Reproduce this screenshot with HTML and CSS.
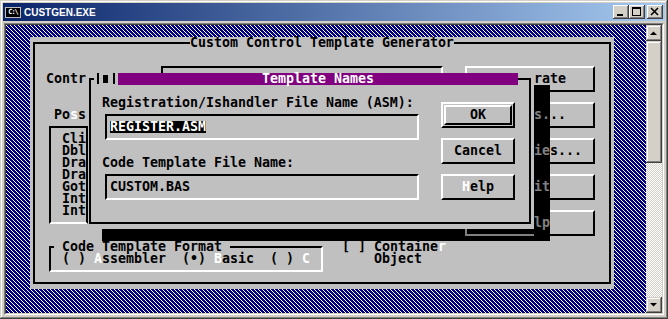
FILE: index.html
```html
<!DOCTYPE html>
<html lang="en">
<head>
    <meta charset="UTF-8">
    <meta name="viewport" content="width=device-width, initial-scale=1.0">
    <title>CUSTGEN.EXE</title>
    <link rel="stylesheet" href="styles.css">
</head>
<body>
<div class="window">
    <div class="titlebar">
        <div class="appicon">C:\</div>
        <div class="title">CUSTGEN.EXE</div>
        <div class="caption-buttons">
            <div class="cap-btn"><svg width="16" height="14" viewBox="0 0 16 14"><rect x="4" y="9" width="6" height="2" fill="#000"/></svg></div>
            <div class="cap-btn"><svg width="16" height="14" viewBox="0 0 16 14"><rect x="3" y="2" width="9" height="2" fill="#000"/><rect x="3.5" y="2.5" width="8" height="8" fill="none" stroke="#000"/></svg></div>
            <div class="cap-btn close"><svg width="16" height="14" viewBox="0 0 16 14"><path d="M4 3 L11 10 M11 3 L4 10" stroke="#000" stroke-width="1.6"/></svg></div>
        </div>
    </div>

    <div class="client">
        <div class="client-in">
            <!-- text mode screen, 80 x 24 cells of 8 x 12 -->
            <div class="screen">
                <!-- main dialog (only what the popup leaves visible) -->
                <div class="dlg main-dlg"><div class="edge"></div></div>
                <div class="txt on-gray main-title">Custom Control Template Generator</div>

                <div class="txt lbl-name">Contr</div>
                <div class="sunken name-box"></div>

                <div class="raised rb rb-1"></div>
                <div class="raised rb rb-2"></div>
                <div class="raised rb rb-3"></div>
                <div class="raised rb rb-4"></div>
                <div class="raised rb rb-5"></div>

                <div class="txt lbl-events">Po<span class="hk">s</span>s</div>
                <div class="txt item it-1">Cli</div>
                <div class="txt item it-2">Dbl</div>
                <div class="txt item it-3">Dra</div>
                <div class="txt item it-4">Dra</div>
                <div class="txt item it-5">Got</div>
                <div class="txt item it-6">Int</div>
                <div class="txt item it-7">Int</div>

                <div class="sunken fmt-box"></div>
                <div class="txt on-gray fmt-title"> Code Template Format </div>
                <div class="txt fmt-opts">( ) <span class="hk">A</span>ssembler  (•) <span class="hk">B</span>asic  ( ) <span class="hk">C</span></div>

                <div class="txt chk-1">[ ] Containe<span class="hk">r</span></div>
                <div class="txt chk-2">Object</div>

                <!-- Template Names dialog -->
                <div class="dlg tpl-dlg"><div class="edge"></div></div>
                <div class="list-frame"></div>
                <div class="ctl"><span class="tick"></span><span class="knob"></span><span class="tick"></span></div>
                <div class="txt tpl-title">Template Names</div>

                <div class="txt lbl-asm">Registration/Ishandler File Name (ASM):</div>
                <div class="sunken tbox-1"></div>
                <div class="txt sel">REGISTER.ASM</div>

                <div class="txt lbl-bas">Code Template File Name:</div>
                <div class="sunken tbox-2"></div>
                <div class="txt val-bas">CUSTOM.BAS</div>

                <div class="raised btn btn-ok"><div class="inner"></div></div>
                <div class="txt t-ok">OK</div>
                <div class="raised btn btn-cancel"></div>
                <div class="txt t-cancel">Cancel</div>
                <div class="raised btn btn-help"></div>
                <div class="txt t-help"><span class="hk">H</span>elp</div>

                <!-- shadow; what lies under it shows dimmed -->
                <div class="shadow sh-right"></div>
                <div class="shadow sh-bottom"></div>
                <div class="dim-line"></div>
                <div class="txt rb-t rb-t1">rate</div>
                <div class="txt rb-t rb-t2"><span class="dim">s.</span>..</div>
                <div class="txt rb-t rb-t3"><span class="dim">ie</span>s...</div>
                <div class="txt rb-t rb-t4"><span class="dim">it</span></div>
                <div class="txt rb-t rb-t5"><span class="dim">lp</span></div>
            </div>

            <div class="vscroll">
                <div class="sb-btn"><svg width="16" height="16" viewBox="0 0 16 16"><polygon points="4,10 11,10 7.5,6.5" fill="#000"/></svg></div>
                <div class="sb-thumb"></div>
                <div class="sb-track"></div>
                <div class="sb-btn"><svg width="16" height="16" viewBox="0 0 16 16"><polygon points="4,6 11,6 7.5,9.5" fill="#000"/></svg></div>
            </div>
        </div>
    </div>
</div>
</body>
</html>
```

FILE: styles.css
```css
body {
    margin: 0;
    width: 668px;
    height: 319px;
    overflow: hidden;
    background: #d4d0c8;
}

.window {
    width: 668px;
    height: 319px;
    box-sizing: border-box;
    padding: 3px;
    background: #d4d0c8;
    box-shadow: inset -1px -1px #404040, inset 1px 1px #d4d0c8, inset -2px -2px #808080, inset 2px 2px #fff;
    display: flex;
    flex-direction: column;
}

/* title bar */
.titlebar {
    height: 18px;
    display: flex;
    align-items: center;
    padding: 0 2px;
    background: linear-gradient(to right, #0a246a, #a6caf0);
}
.appicon {
    width: 14px;
    height: 9px;
    margin-right: 3px;
    border: 1px solid #c0c0c0;
    background: #000;
    color: #fff;
    font: bold 7px/9px "DejaVu Sans Mono", monospace;
    letter-spacing: -1px;
    text-align: center;
}
.title {
    flex: 1;
    color: #fff;
    font: bold 10px "Liberation Sans", Arial, sans-serif;
}
.caption-buttons {
    display: flex;
}
.cap-btn {
    width: 16px;
    height: 14px;
    background: #d4d0c8;
    box-shadow: inset -1px -1px #404040, inset 1px 1px #fff, inset -2px -2px #808080;
}
.cap-btn svg {
    display: block;
}
.cap-btn.close {
    margin-left: 2px;
}

/* console client area */
.client {
    margin: 2px 1px 1px;
    border: 1px solid;
    border-color: #808080 #fff #fff #808080;
}
.client-in {
    display: flex;
    border: 1px solid;
    border-color: #404040 #d4d0c8 #d4d0c8 #404040;
}

.screen {
    width: 640px;
    height: 288px;
    display: grid;
    grid-template-columns: repeat(80, 8px);
    grid-template-rows: repeat(24, 12px);
    background:
        conic-gradient(at 1px 1px, #0000 75%, #fff 0) 0 0 / 4px 4px,
        conic-gradient(at 1px 1px, #0000 75%, #fff 0) 1px 1px / 4px 4px,
        conic-gradient(at 1px 1px, #0000 75%, #fff 0) 2px 2px / 4px 4px,
        conic-gradient(at 1px 1px, #0000 75%, #fff 0) 3px 3px / 4px 4px,
        #000080;
    font: bold 13.29px "DejaVu Sans Mono", monospace;
    line-height: 12px;
    color: #000;
}

.txt {
    white-space: pre;
}
.hk {
    color: #fff;
}
.on-gray {
    background: #c0c0c0;
}

.dlg {
    display: flex;
    background: #c0c0c0;
}
.dlg .edge {
    flex: 1;
    margin: 5px 3px;
    border: 2px solid #000;
}
.sunken {
    margin: 5px 3px;
    border: 2px solid;
    border-color: #000 #fff #fff #000;
}
.raised {
    margin: 5px 3px;
    border: 2px solid;
    border-color: #fff #000 #000 #fff;
}

/* main dialog */
.main-dlg { grid-column: 4 / 77; grid-row: 2 / 23; }
.main-title { grid-column: 24 / span 33; grid-row: 2; }
.lbl-name { grid-column: 6 / span 5; grid-row: 5; }
.name-box { grid-column: 20 / 56; grid-row: 4 / 7; }

.rb { grid-column: 58 / 75; }
.rb-1 { grid-row: 4 / 7; }
.rb-2 { grid-row: 7 / 10; }
.rb-3 { grid-row: 10 / 13; }
.rb-4 { grid-row: 13 / 16; }
.rb-5 { grid-row: 16 / 19; }

.lbl-events { grid-column: 7 / span 4; grid-row: 8; }
.item { grid-column: 8 / span 3; }
.it-1 { grid-row: 10; }
.it-2 { grid-row: 11; }
.it-3 { grid-row: 12; }
.it-4 { grid-row: 13; }
.it-5 { grid-row: 14; }
.it-6 { grid-row: 15; }
.it-7 { grid-row: 16; }

.fmt-box { grid-column: 6 / 41; grid-row: 19 / 22; }
.fmt-title { grid-column: 7 / span 22; grid-row: 19; }
.fmt-opts { grid-column: 8 / span 31; grid-row: 20; }
.chk-1 { grid-column: 43 / span 13; grid-row: 19; }
.chk-2 { grid-column: 47 / span 6; grid-row: 20; }

/* Template Names dialog */
.tpl-dlg { grid-column: 11 / 67; grid-row: 5 / 18; }
.list-frame {
    grid-column: 6 / 11;
    grid-row: 9 / 18;
    margin: 5px -2px 5px 3px;
    border: 2px solid #000;
    border-bottom-color: #fff;
}
.ctl {
    grid-column: 12 / 15;
    grid-row: 5;
    display: flex;
    background: #c0c0c0;
}
.ctl .tick {
    width: 0;
    margin: 0 3px 1px 3px;
    border-left: 2px solid #000;
}
.ctl .knob {
    width: 5px;
    margin: 2px 2px 2px 1px;
    background: #000;
}
.tpl-title {
    grid-column: 15 / 65;
    grid-row: 5;
    background: #800080;
    color: #fff;
    text-align: center;
}

.lbl-asm { grid-column: 13 / span 39; grid-row: 7; }
.tbox-1 { grid-column: 13 / 53; grid-row: 8 / 11; }
.sel { grid-column: 14 / span 12; grid-row: 9; background: #000; color: #fff; }
.lbl-bas { grid-column: 13 / span 24; grid-row: 12; }
.tbox-2 { grid-column: 13 / 53; grid-row: 13 / 16; }
.val-bas { grid-column: 14 / span 10; grid-row: 14; }

.btn { grid-column: 55 / 65; }
.btn-ok { grid-row: 7 / 10; display: flex; }
.btn-ok .inner {
    flex: 1;
    margin: 1px;
    border: 2px solid;
    border-color: #fff #000 #000 #fff;
}
.btn-cancel { grid-row: 10 / 13; }
.btn-help { grid-row: 13 / 16; }
.t-ok { grid-column: 59 / span 2; grid-row: 8; }
.t-cancel { grid-column: 57 / span 6; grid-row: 11; }
.t-help { grid-column: 58 / span 4; grid-row: 14; }

/* shadow */
.shadow { background: #000; }
.sh-right { grid-column: 67 / 69; grid-row: 6 / 19; }
.sh-bottom { grid-column: 13 / 69; grid-row: 18; }
.dim { color: #808080; }
.dim-line {
    grid-column: 58 / 67;
    grid-row: 18;
    margin: 0 0 5px 3px;
    border-left: 2px solid #808080;
    border-bottom: 2px solid #808080;
}

/* right-hand buttons of the main dialog, from column 66 on */
.rb-t { grid-column: 67 / span 6; }
.rb-t1 { grid-row: 5; }
.rb-t2 { grid-row: 8; }
.rb-t3 { grid-row: 11; }
.rb-t4 { grid-row: 14; }
.rb-t5 { grid-row: 17; }

/* console scroll bar */
.vscroll {
    width: 16px;
    height: 288px;
    display: flex;
    flex-direction: column;
}
.sb-btn {
    height: 16px;
    background: #d4d0c8;
    box-shadow: inset -1px -1px #404040, inset 1px 1px #d4d0c8, inset -2px -2px #808080, inset 2px 2px #fff;
}
.sb-btn svg {
    display: block;
}
.sb-thumb {
    height: 122px;
    background: #d4d0c8;
    box-shadow: inset -1px -1px #404040, inset 1px 1px #d4d0c8, inset -2px -2px #808080, inset 2px 2px #fff;
}
.sb-track {
    flex: 1;
    background: conic-gradient(#fff 25%, #d4d0c8 0 50%, #fff 0 75%, #d4d0c8 0) 0 0 / 2px 2px;
}
```
